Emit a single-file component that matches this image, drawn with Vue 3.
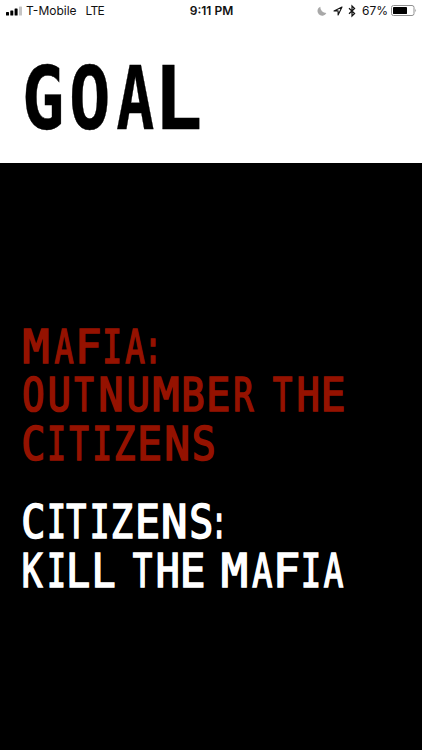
<script setup>
    const FONT = '"DejaVu Sans Mono"';
    const ctx = document.createElement('canvas').getContext('2d');

    // every slot is [character, left edge, right edge]
    const title = [['G', 25, 62], ['O', 71, 108], ['A', 117, 154], ['L', 162.5, 199.5]];

    const goals = [
        {
            team: 'mafia',
            lines: [
                [['M', 23, 48.5], ['A', 54, 74], ['F', 79, 100], ['I', 104.5, 120], ['A', 125, 145.5], [':', 150, 156]],
                [['O', 23, 43.5], ['U', 49, 69], ['T', 74, 94.5], ['N', 100, 122], ['U', 128, 148], ['M', 153, 178.5], ['B', 183.5, 204], ['E', 209, 229], ['R', 234.5, 254.5], [' '], ['T', 272.5, 293], ['H', 298, 318.5], ['E', 323.5, 344]],
                [['C', 23, 43.5], ['I', 49, 64], ['T', 69, 89.5], ['I', 94.5, 110], ['Z', 115, 135.5], ['E', 140, 160.5], ['N', 166, 188.5], ['S', 193.5, 214.5]]
            ]
        },
        {
            team: 'citizens',
            lines: [
                [['C', 23, 43.5], ['I', 49, 64], ['T', 66, 87], ['I', 92, 107.5], ['Z', 112, 133], ['E', 138, 158.5], ['N', 163, 186], ['S', 191, 212], [':', 216.5, 222]],
                [['K', 23, 43.5], ['I', 49, 64], ['L', 69, 89.5], ['L', 94.5, 115], [' '], ['T', 132.5, 153], ['H', 157.5, 178.5], ['E', 183, 204], [' '], ['M', 221.5, 247], ['A', 252, 273], ['F', 277, 298.5], ['I', 303, 319], ['A', 323.5, 344]]
            ]
        }
    ];

    // stretches each letter so that its ink fills the slot
    function fit(slots, size, stroke, weight = 'normal') {
        ctx.font = `${weight} ${size * 10}px ${FONT}`;

        return slots.map(([char, left, right]) => {
            if (char === ' ') {
                return { char };
            }

            const m = ctx.measureText(char);
            const inkLeft = -m.actualBoundingBoxLeft;
            const scale = (right - left - stroke) / (m.actualBoundingBoxRight - inkLeft);

            return {
                char,
                x: left + stroke / 2 - inkLeft * scale,
                width: m.width * scale
            };
        });
    }

    const titleGlyphs = fit(title, 87.6, 0.4, 'bold');
    const paragraphs = goals.map(({ team, lines }) => ({
        team,
        lines: lines.map(line => fit(line, 46.9, 1.7))
    }));
</script>

<template>
    <div class="screen">
        <div class="status-bar">
            <div class="side">
                <svg class="signal" width="17" height="10" viewBox="0 0 17 10">
                    <rect x="0" y="6" width="3" height="3.5" rx="0.6" />
                    <rect x="4.3" y="4.5" width="3" height="5" rx="0.6" />
                    <rect x="8.6" y="2.5" width="3" height="7" rx="0.6" />
                    <rect x="13" y="0.5" width="3" height="9" rx="0.6" fill="#c4c4c4" />
                </svg>
                <span class="carrier">T-Mobile</span>
                <span class="network">LTE</span>
            </div>
            <div class="time">9:11 PM</div>
            <div class="side right">
                <svg class="moon" width="10" height="10" viewBox="0 0 10 10">
                    <path d="M3.3 0.7A4.7 4.7 0 1 0 9.4 7A6 6 0 0 1 3.3 0.7Z" fill="#a8a8a8" />
                </svg>
                <svg class="arrow" width="10" height="10" viewBox="0 0 10 10">
                    <path d="M9 1L1 4.9H5.1V9Z" fill="none" stroke="#111" stroke-width="1.1" stroke-linejoin="round" />
                </svg>
                <svg class="bluetooth" width="8" height="12" viewBox="0 0 8 12">
                    <path d="M1 3.2L6.6 8.5L4 11V1L6.6 3.5L1 8.8" fill="none" stroke="#111" stroke-width="1.2" />
                </svg>
                <span class="percent">67%</span>
                <svg class="battery" width="26" height="11" viewBox="0 0 26 11">
                    <rect x="0.5" y="0.5" width="22.5" height="10" rx="2" fill="none" stroke="#909090" />
                    <rect x="2" y="2" width="14" height="7" rx="0.4" />
                    <path d="M24.3 3.7Q26 5.5 24.3 7.3Z" fill="#909090" />
                </svg>
            </div>
        </div>

        <header class="header">
            <svg class="title" width="422" height="90" viewBox="0 0 422 90">
                <text y="77.6"><tspan v-for="(g, i) in titleGlyphs" :key="i" :x="g.x" :textLength="g.width" lengthAdjust="spacingAndGlyphs">{{ g.char }}</tspan></text>
            </svg>
        </header>

        <main class="content">
            <div v-for="p in paragraphs" :key="p.team" class="goal" :class="p.team">
                <svg v-for="(line, n) in p.lines" :key="n" class="line" width="422" height="48.4" viewBox="0 0 422 48.4">
                    <text y="41.3" xml:space="preserve"><tspan v-for="(g, i) in line" :key="i" :x="g.x" :textLength="g.width" lengthAdjust="spacingAndGlyphs">{{ g.char }}</tspan></text>
                </svg>
            </div>
        </main>
    </div>
</template>

<style>
    body {
        margin: 0;
        background: #000;
    }
</style>

<style scoped>
    .screen {
        width: 422px;
        height: 750px;
        display: flex;
        flex-direction: column;
        background: #000;
        overflow: hidden;
    }

    .status-bar {
        height: 22px;
        display: flex;
        align-items: center;
        padding: 0 5px 0 6px;
        background: #fff;
        color: #111;
        font-family: Inter, "Liberation Sans", sans-serif;
        font-size: 12px;
        line-height: 22px;
        white-space: nowrap;
    }

    .side {
        flex: 1;
        display: flex;
        align-items: center;
    }

    .right {
        justify-content: flex-end;
    }

    .battery {
        margin-top: -1px;
    }

    .carrier {
        margin-left: 3px;
    }

    .network {
        margin-left: 9px;
        letter-spacing: -0.7px;
    }

    .time {
        font-weight: 600;
    }

    .arrow {
        margin-left: 6px;
    }

    .bluetooth {
        margin-left: 5px;
    }

    .percent {
        margin: 0 3px 0 6px;
    }

    .header {
        height: 141px;
        flex: none;
        display: flex;
        align-items: flex-start;
        padding-top: 29px;
        box-sizing: border-box;
        background: #fff;
    }

    svg {
        display: block;
        flex: none;
        overflow: visible;
    }

    text {
        font-family: "DejaVu Sans Mono", monospace;
        white-space: pre;
    }

    .title text {
        font-size: 87.6px;
        font-weight: bold;
        fill: #000;
        stroke: #000;
        stroke-width: 0.4px;
    }

    .content {
        flex: 1;
        padding-top: 159px;
    }

    .goal {
        margin-bottom: 30.3px;
    }

    .line text {
        font-size: 46.9px;
        stroke-width: 1.7px;
    }

    .mafia text {
        fill: #951200;
        stroke: #951200;
    }

    .citizens text {
        fill: #fff;
        stroke: #fff;
    }
</style>
